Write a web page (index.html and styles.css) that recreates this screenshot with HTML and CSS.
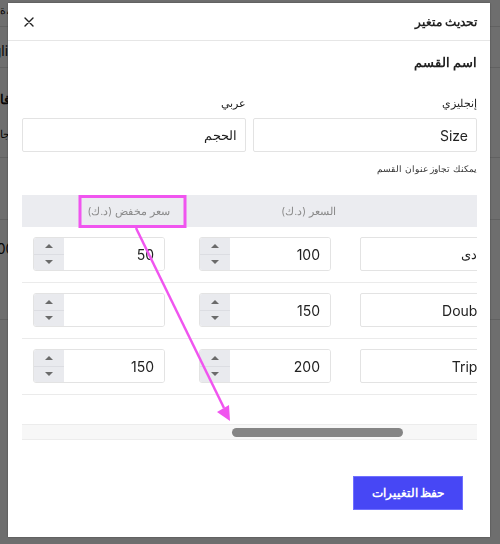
FILE: index.html
```html
<!DOCTYPE html>
<html lang="ar" dir="rtl">
<head>
    <meta charset="UTF-8">
    <meta name="viewport" content="width=device-width, initial-scale=1.0">
    <title>تحديث متغير</title>
    <link rel="stylesheet" href="styles.css">
</head>
<body>
    <!-- Page behind the dialog -->
    <div class="page">
        <div class="page-row row-a"><span class="frag small">ة،</span></div>
        <div class="page-row row-b"><span class="frag latin">English</span></div>
        <div class="page-row row-c">
            <span class="frag bold">فا</span>
            <span class="frag small">جا</span>
        </div>
        <div class="page-row row-d"></div>
        <div class="page-row row-e"><span class="frag latin num-frag">100</span></div>
    </div>
    <div class="backdrop"></div>

    <!-- Dialog -->
    <div class="modal">
        <div class="modal-header">
            <h2>تحديث متغير</h2>
            <button class="close" type="button" aria-label="إغلاق">
                <svg width="10" height="10" viewBox="0 0 10 10">
                    <path d="M1 1L9 9M9 1L1 9" stroke="#222" stroke-width="1.4" stroke-linecap="round"/>
                </svg>
            </button>
        </div>

        <div class="modal-body">
            <h3 class="section-title">اسم القسم</h3>

            <div class="name-fields">
                <div class="field">
                    <label for="nameEn">إنجليزي</label>
                    <input type="text" id="nameEn" value="Size">
                </div>
                <div class="field">
                    <label for="nameAr">عربي</label>
                    <input type="text" id="nameAr" class="ar" value="الحجم">
                </div>
            </div>
            <p class="help">يمكنك تجاوز عنوان القسم</p>

            <!-- Variants table (scrolled sideways) -->
            <div class="table-wrap">
                <table class="variants">
                    <colgroup>
                        <col class="col-name">
                        <col class="col-price">
                        <col class="col-price">
                        <col>
                    </colgroup>
                    <thead>
                        <tr>
                            <th></th>
                            <th>السعر (د.ك)</th>
                            <th>سعر مخفض (د.ك)</th>
                            <th></th>
                        </tr>
                    </thead>
                    <tbody>
                        <tr>
                            <td><input class="text-input ar" type="text" value="عادى"></td>
                            <td>
                                <div class="num">
                                    <input type="text" value="100">
                                    <div class="spin"><span class="up"></span><span class="down"></span></div>
                                </div>
                            </td>
                            <td>
                                <div class="num">
                                    <input type="text" value="50">
                                    <div class="spin"><span class="up"></span><span class="down"></span></div>
                                </div>
                            </td>
                            <td></td>
                        </tr>
                        <tr>
                            <td><input class="text-input" type="text" value="Double"></td>
                            <td>
                                <div class="num">
                                    <input type="text" value="150">
                                    <div class="spin"><span class="up"></span><span class="down"></span></div>
                                </div>
                            </td>
                            <td>
                                <div class="num">
                                    <input type="text" value="">
                                    <div class="spin"><span class="up"></span><span class="down"></span></div>
                                </div>
                            </td>
                            <td></td>
                        </tr>
                        <tr>
                            <td><input class="text-input" type="text" value="Triple"></td>
                            <td>
                                <div class="num">
                                    <input type="text" value="200">
                                    <div class="spin"><span class="up"></span><span class="down"></span></div>
                                </div>
                            </td>
                            <td>
                                <div class="num">
                                    <input type="text" value="150">
                                    <div class="spin"><span class="up"></span><span class="down"></span></div>
                                </div>
                            </td>
                            <td></td>
                        </tr>
                    </tbody>
                </table>
            </div>
            <div class="scrollbar"><div class="thumb"></div></div>
        </div>

        <div class="modal-footer">
            <button class="save" type="button">حفظ التغييرات</button>
        </div>
    </div>

    <!-- Annotation drawn on top of the screenshot -->
    <svg class="annotation" width="500" height="544" viewBox="0 0 500 544">
        <rect x="80" y="196.5" width="105" height="30" fill="none" stroke="#f055ef" stroke-width="3"/>
        <path d="M136 228L224 408" stroke="#f055ef" stroke-width="2.5" fill="none"/>
        <path d="M230 421L217 412L229 405Z" fill="#f055ef"/>
    </svg>
</body>
</html>
```

FILE: styles.css
```css
* {
    box-sizing: border-box;
}
body {
    margin: 0;
    width: 500px;
    height: 544px;
    overflow: hidden;
    font-family: Inter, "Noto Sans", sans-serif;
    color: #222;
    background-color: #fff;
}

/* page behind */
.page {
    direction: ltr;
}
.page-row {
    border-bottom: 1px solid #e2e2e2;
    font-size: 14px;
    color: #111;
}
.row-a { height: 27px; padding-top: 1px; }
.row-b { height: 41px; padding-top: 15px; }
.row-c { height: 90px; padding-top: 22px; }
.row-d { height: 62px; }
.row-e { height: 100px; padding-top: 20px; }
.frag {
    display: block;
    line-height: 18px;
}
.frag.small {
    font-size: 11px;
}
.frag.bold {
    font-weight: 700;
    font-size: 13px;
    margin-bottom: 17px;
}
.frag.latin {
    margin-left: -24px;
}
.frag.num-frag {
    margin-left: -9px;
}
.backdrop {
    position: fixed;
    inset: 0;
    background-color: rgba(0, 0, 0, 0.57);
}

/* dialog */
.modal {
    position: fixed;
    left: 8px;
    top: 3px;
    width: 482px;
    height: 534px;
    background-color: #fff;
    box-shadow: 0 0 2px rgba(0, 0, 0, 0.35);
    display: flex;
    flex-direction: column;
}
.modal-header {
    height: 38px;
    flex-shrink: 0;
    display: flex;
    align-items: center;
    justify-content: space-between;
    padding: 0 13px 0 16px;
    border-bottom: 1px solid #e6e6e6;
}
.modal-header h2 {
    margin: 0;
    font-size: 12px;
    font-weight: 700;
}
.close {
    width: 10px;
    height: 10px;
    padding: 0;
    border: none;
    background: none;
    display: flex;
}
.modal-body {
    padding: 12px 13px 0 14px;
}
.section-title {
    margin: 0 0 22px;
    font-size: 12.5px;
    font-weight: 700;
    line-height: 20px;
}
.name-fields {
    display: grid;
    grid-template-columns: 1fr 1fr;
    gap: 7px;
}
.field label {
    display: block;
    font-size: 11px;
    line-height: 17px;
    margin-bottom: 6px;
}
.field input,
.text-input {
    width: 100%;
    height: 34px;
    padding: 0 8px;
    border: 1px solid #e3e3e3;
    border-radius: 2px;
    font-family: inherit;
    font-size: 14px;
    color: #222;
    background-color: #fff;
}
.field input.ar,
.text-input.ar {
    font-size: 12.5px;
}
.help {
    margin: 9px 0 19px;
    font-size: 9px;
    line-height: 15px;
    color: #333;
}

/* table */
.table-wrap {
    overflow: hidden;
}
.variants {
    width: 1000px;
    margin-right: -35px;
    border-collapse: collapse;
    table-layout: fixed;
}
.col-name {
    width: 164px;
}
.col-price {
    width: 166px;
}
.variants th {
    height: 32px;
    padding: 0 12px;
    background-color: #ebecf0;
    color: #8a8a8a;
    font-size: 10.5px;
    font-weight: 400;
    text-align: right;
}
.variants td {
    padding: 10px 12px 11px;
    border-bottom: 1px solid #ebebeb;
}
.text-input {
    padding: 0 10px;
}
.num {
    display: flex;
    width: 132px;
    height: 34px;
    margin: 0 5px;
    border: 1px solid #e3e3e3;
    border-radius: 3px;
    overflow: hidden;
}
.num input {
    flex: 1;
    min-width: 0;
    border: none;
    padding: 0 10px;
    font-family: inherit;
    font-size: 14px;
    color: #222;
    text-align: right;
}
.spin {
    width: 30px;
    display: flex;
    flex-direction: column;
    background-color: #e9eaee;
}
.spin span {
    flex: 1;
    display: flex;
    align-items: center;
    justify-content: center;
}
.spin .up {
    border-bottom: 1px solid #dcdde2;
}
.spin .up::before {
    content: "";
    border-left: 4px solid transparent;
    border-right: 4px solid transparent;
    border-bottom: 4px solid #6b6b6b;
}
.spin .down::before {
    content: "";
    border-left: 4px solid transparent;
    border-right: 4px solid transparent;
    border-top: 4px solid #6b6b6b;
}
.scrollbar {
    margin-top: 29px;
    height: 16px;
    display: flex;
    align-items: center;
    padding-right: 74px;
    background-color: #f7f7f7;
    border-top: 1px solid #ececec;
    border-bottom: 1px solid #ececec;
}
.thumb {
    width: 171px;
    height: 9px;
    border-radius: 5px;
    background-color: #858585;
}

/* footer */
.modal-footer {
    padding: 36px 27px 0;
}
.save {
    width: 110px;
    height: 34px;
    border: 1px solid #7070ff;
    background-color: #4747f5;
    color: #fff;
    font-family: inherit;
    font-size: 11.5px;
    font-weight: 700;
    cursor: pointer;
}

.annotation {
    position: fixed;
    left: 0;
    top: 0;
    pointer-events: none;
}
```
